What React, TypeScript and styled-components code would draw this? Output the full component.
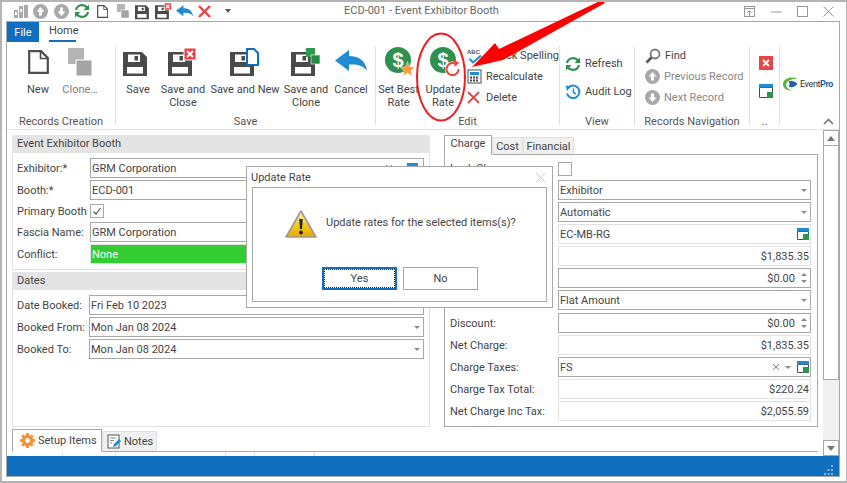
import React from 'react';
import styled, { createGlobalStyle } from 'styled-components';

const GlobalStyle = createGlobalStyle`
  html, body { margin: 0; padding: 0; background: #fff; }
  body { font-family: Roboto, "Liberation Sans", sans-serif; font-size: 11px; color: #444; }
  * { box-sizing: border-box; }
  svg { display: block; flex: none; }
`;

const BORDER = '#a8a8a8';
const LIGHT = '#e2e2e2';
const BLUE = '#106ebe';

const Window = styled.div`
  position: relative;
  width: 847px;
  height: 483px;
  border: 2px solid #b4b4b4;
  border-right-width: 1px;
  background: #fff;
  overflow: hidden;
`;

const TitleBar = styled.div`
  position: relative;
  height: 19px;
  display: flex;
  align-items: center;
  padding-left: 8px;
`;

const QuickIcons = styled.div`
  display: flex;
  align-items: center;
`;

const QuickSlot = styled.div<{ $w?: number }>`
  width: ${(p) => p.$w ?? 20.5}px;
  flex: none;
  display: flex;
  justify-content: center;
  align-items: center;
`;

const QuickCaret = styled.span`
  border-left: 3.5px solid transparent;
  border-right: 3.5px solid transparent;
  border-top: 4px solid #555;
`;

const TitleText = styled.div`
  position: absolute;
  left: 342px;
  top: 2px;
  color: #666;
  white-space: nowrap;
`;

const WindowButtons = styled.div`
  margin-left: auto;
  width: 103px;
  padding-right: 12px;
  display: flex;
  justify-content: space-between;
  align-items: center;
`;

const Frame = styled.div`
  margin: 0 3px 0 4px;
  width: 834px;
  height: 456px;
  border: 1px solid ${BORDER};
  display: flex;
  flex-direction: column;
`;

const TabRow = styled.div`
  height: 20px;
  display: flex;
`;

const FileTab = styled.div`
  width: 32px;
  background: ${BLUE};
  color: #fff;
  display: flex;
  align-items: center;
  justify-content: center;
`;

const HomeTab = styled.div`
  margin-left: 10px;
  width: 27px;
  height: 20px;
  border-bottom: 2px solid ${BLUE};
  text-align: center;
  color: #444;
  line-height: 18px;
  white-space: nowrap;
`;

const Ribbon = styled.div`
  height: 88px;
  display: flex;
  border-bottom: 1px solid ${LIGHT};
  padding: 4px 0;
  position: relative;
`;

const Group = styled.div<{ $w: number; $last?: boolean }>`
  width: ${(p) => p.$w}px;
  flex: none;
  display: flex;
  flex-direction: column;
  border-right: ${(p) => (p.$last ? 'none' : `1px solid ${LIGHT}`)};
`;

const GroupBody = styled.div<{ $pl?: number; $col?: boolean }>`
  flex: 1;
  display: flex;
  flex-direction: ${(p) => (p.$col ? 'column' : 'row')};
  padding-left: ${(p) => p.$pl ?? 0}px;
  min-height: 0;
`;

const GroupLabel = styled.div`
  height: 15px;
  line-height: 15px;
  margin-bottom: -4px;
  text-align: center;
  color: #555;
  white-space: nowrap;
`;

const LargeButton = styled.div<{ $w: number; $muted?: boolean }>`
  width: ${(p) => p.$w}px;
  flex: none;
  display: flex;
  flex-direction: column;
  align-items: center;
  color: ${(p) => (p.$muted ? '#808080' : '#444')};
  line-height: 13px;
  text-align: center;
  white-space: nowrap;
`;

const LargeIcon = styled.div<{ $pb?: number }>`
  height: 30px;
  margin-bottom: 7px;
  padding-bottom: ${(p) => p.$pb ?? 0}px;
  display: flex;
  align-items: flex-end;
  justify-content: center;
`;

const SmallColumn = styled.div<{ $gap: number; $pt: number; $pl: number }>`
  display: flex;
  flex-direction: column;
  gap: ${(p) => p.$gap}px;
  padding-top: ${(p) => p.$pt}px;
  padding-left: ${(p) => p.$pl}px;
`;

const SmallButton = styled.div<{ $muted?: boolean }>`
  height: 15px;
  display: flex;
  align-items: center;
  gap: 4px;
  white-space: nowrap;
  color: ${(p) => (p.$muted ? '#888' : '#444')};
`;

const DeleteText = styled.span`
  margin-left: 2px;
`;

const LogoBox = styled.div`
  display: flex;
  align-items: center;
  padding: 31px 0 0 2px;
  gap: 2px;
`;

const LogoText = styled.span`
  font-size: 9px;
  letter-spacing: -0.4px;
  color: #333;
  b { color: #1d5fa8; font-weight: 700; }
`;

const Collapse = styled.div`
  position: absolute;
  right: 5px;
  bottom: 4px;
  line-height: 0;
`;

const Body = styled.div`
  flex: 1;
  display: flex;
  min-height: 0;
`;

const Content = styled.div`
  flex: 1;
  min-width: 0;
  display: flex;
  flex-direction: column;
  padding: 5px 5px 0;
`;

const Columns = styled.div`
  display: flex;
  gap: 14px;
  height: 292px;
`;

const LeftColumn = styled.div`
  width: 418px;
  flex: none;
  display: flex;
  flex-direction: column;
  gap: 2px;
`;

const Panel = styled.div<{ $grow?: boolean }>`
  border: 1px solid ${LIGHT};
  border-top: none;
  ${(p) => (p.$grow ? 'flex: 1;' : '')}
`;

const PanelHeader = styled.div`
  height: 18px;
  margin: 0 -1px;
  padding-left: 5px;
  background: #e4e4e4;
  line-height: 17px;
  color: #444;
`;

const PanelRows = styled.div`
  padding: 5px 5px 5px 4px;
  display: flex;
  flex-direction: column;
  gap: 2px;
`;

const Row = styled.div<{ $h?: number; $mt?: number }>`
  display: flex;
  height: ${(p) => p.$h ?? 20}px;
  margin-top: ${(p) => p.$mt ?? 0}px;
  align-items: center;
`;

const Label = styled.div<{ $w: number }>`
  width: ${(p) => p.$w}px;
  flex: none;
  color: #444;
  white-space: nowrap;
`;

const Field = styled.div<{ $tone?: 'edit' | 'read' | 'green' }>`
  flex: 1;
  height: 20px;
  min-width: 0;
  display: flex;
  align-items: center;
  gap: 4px;
  padding: 0 1px;
  color: ${(p) => (p.$tone === 'green' ? '#fff' : '#444')};
  background: ${(p) => (p.$tone === 'green' ? '#33cc33' : '#fff')};
  border: 1px solid ${(p) => (p.$tone === 'edit' || !p.$tone ? BORDER : LIGHT)};
`;

const FieldValue = styled.span<{ $right?: boolean }>`
  flex: 1;
  white-space: nowrap;
  text-align: ${(p) => (p.$right ? 'right' : 'left')};
`;

const FieldGap = styled.span<{ $w: number }>`
  width: ${(p) => p.$w}px;
  flex: none;
`;

const Check = styled.div<{ $mt?: number }>`
  width: 14px;
  height: 14px;
  margin-top: ${(p) => p.$mt ?? 0}px;
  border: 1px solid ${BORDER};
  background: #fff;
  display: flex;
  align-items: center;
  justify-content: center;
`;

const DropArrow = styled.span`
  width: 0;
  height: 0;
  margin: 0 2px 0 1px;
  border-left: 3.5px solid transparent;
  border-right: 3.5px solid transparent;
  border-top: 3.5px solid #8a8a8a;
`;

const Spin = styled.span`
  display: flex;
  flex-direction: column;
  gap: 4px;
  margin: 0 2px;
  &::before, &::after {
    content: '';
    width: 0;
    height: 0;
    border-left: 3px solid transparent;
    border-right: 3px solid transparent;
  }
  &::before { border-bottom: 3px solid #8a8a8a; }
  &::after { border-top: 3px solid #8a8a8a; }
`;

const RightColumn = styled.div`
  width: 374px;
  flex: none;
  display: flex;
  flex-direction: column;
`;

const PageTabs = styled.div`
  height: 20px;
  display: flex;
  align-items: flex-end;
  margin-bottom: -1px;
`;

const PageTab = styled.div<{ $active?: boolean; $w: number }>`
  width: ${(p) => p.$w}px;
  height: ${(p) => (p.$active ? 20 : 18)}px;
  color: #444;
  text-align: center;
  line-height: ${(p) => (p.$active ? 16 : 17)}px;
  background: ${(p) => (p.$active ? '#fff' : '#f0f0f0')};
  border: 1px solid ${(p) => (p.$active ? BORDER : LIGHT)};
  border-bottom: ${(p) => (p.$active ? '1px solid #fff' : `1px solid ${BORDER}`)};
  position: relative;
  z-index: 1;
`;

const PagePane = styled.div`
  flex: 1;
  border: 1px solid ${BORDER};
  padding: 3px 6px 0 5px;
  display: flex;
  flex-direction: column;
  gap: 2px;
`;

const BottomTabs = styled.div`
  margin-top: 2px;
  height: 23px;
  display: flex;
  align-items: flex-end;
  border-bottom: 1px solid ${BORDER};
`;

const BottomTab = styled.div<{ $active?: boolean; $w: number }>`
  width: ${(p) => p.$w}px;
  height: ${(p) => (p.$active ? 23 : 21)}px;
  margin-bottom: -1px;
  display: flex;
  align-items: center;
  gap: 3px;
  padding-left: ${(p) => (p.$active ? 7 : 4)}px;
  color: #444;
  background: ${(p) => (p.$active ? '#fff' : '#f0f0f0')};
  border: 1px solid ${(p) => (p.$active ? BORDER : LIGHT)};
  border-bottom: ${(p) => (p.$active ? '1px solid #fff' : `1px solid ${BORDER}`)};
`;

const GridHead = styled.div`
  height: 4px;
  display: flex;
  margin: 0 0 0 5px;
`;

const GridTick = styled.div<{ $w: number }>`
  width: ${(p) => p.$w}px;
  flex: none;
  border-right: 1px solid ${LIGHT};
`;

const ScrollBar = styled.div`
  width: 16px;
  flex: none;
  background: #f0f0f0;
  display: flex;
  flex-direction: column;
`;

const ScrollButton = styled.div`
  height: 16px;
  flex: none;
  background: #fff;
  border: 1px solid ${BORDER};
  display: flex;
  align-items: center;
  justify-content: center;
`;

const ScrollThumb = styled.div`
  height: 235px;
  margin-top: -1px;
  background: #fff;
  border: 1px solid ${BORDER};
`;

const ScrollSpace = styled.div`
  flex: 1;
`;

const StatusBar = styled.div`
  height: 20px;
  flex: none;
  background: ${BLUE};
  position: relative;
`;

const Grip = styled.svg`
  position: absolute;
  right: 5px;
  bottom: 1px;
`;

const Dialog = styled.div`
  position: absolute;
  left: 244px;
  top: 164px;
  width: 307px;
  height: 142px;
  background: #fff;
  border: 1px solid ${BORDER};
  padding: 0 5px 5px;
  display: flex;
  flex-direction: column;
`;

const DialogTitle = styled.div`
  height: 20px;
  display: flex;
  align-items: center;
  justify-content: space-between;
  color: #444;
  padding: 0 1px 0 0;
  margin-left: -1px;
`;

const DialogBox = styled.div`
  flex: 1;
  border: 1px solid ${BORDER};
  display: flex;
  flex-direction: column;
`;

const DialogMessage = styled.div`
  height: 79px;
  display: flex;
  align-items: flex-start;
  gap: 9px;
  padding: 22px 0 0 32px;
  color: #444;
`;

const MessageText = styled.div`
  margin-top: 6px;
  white-space: nowrap;
`;

const DialogButtons = styled.div`
  display: flex;
  gap: 6px;
  padding-left: 69px;
`;

const DialogButton = styled.div<{ $focused?: boolean }>`
  width: 75px;
  height: 23px;
  color: #444;
  display: flex;
  align-items: center;
  justify-content: center;
  border: ${(p) => (p.$focused ? `2px solid ${BLUE}` : `1px solid ${BORDER}`)};
  outline: ${(p) => (p.$focused ? '1px dotted #222' : 'none')};
  outline-offset: -3px;
`;

const Annotation = styled.svg`
  position: absolute;
  left: -2px;
  top: -2px;
  pointer-events: none;
`;

const Ic = ({ s = 16, w = s, children }: { s?: number; w?: number; children: React.ReactNode }) => (
  <svg width={w} height={s} viewBox={`0 0 ${w} ${s}`}>
    {children}
  </svg>
);

const NewIcon = ({ size = 24 }: { size?: number }) => (
  <svg width={size * 0.875} height={size} viewBox="0 0 21 24">
    <path d="M1.2 1.2H13L19.8 8V22.8H1.2Z" fill="#fff" stroke="#4d4d4d" strokeWidth="2.2" />
    <path d="M12.5 1.2V8.5H19.8" fill="none" stroke="#4d4d4d" strokeWidth="1.6" />
  </svg>
);

const CloneIcon = ({ size = 28 }: { size?: number }) => (
  <svg width={size * 0.86} height={size} viewBox="0 0 24 28">
    <rect x="0" y="0" width="16" height="16" fill="#b4b4b4" />
    <rect x="8" y="12" width="16" height="16" fill="#a4a4a4" stroke="#fff" strokeWidth="1" />
  </svg>
);

// the floppy shape is shared by all save buttons, only the badge differs
const SaveShape = () => (
  <path
    fillRule="evenodd"
    fill="#4a4a4a"
    d="M0 0H19L24 5V24H0ZM5 2.5V10H17V2.5ZM11.5 4H15V8.5H11.5ZM4 15V21.5H20V15Z"
  />
);

const SaveIcon = ({ badge, small }: { badge?: 'close' | 'new' | 'clone'; small?: boolean }) => {
  const k = small ? 0.58 : 1;
  return (
    <svg width={30 * k} height={28 * k} viewBox="0 0 30 28">
      <g transform="translate(0 4)">
        <SaveShape />
      </g>
      {badge === 'close' && (
        <g>
          <rect x="16" y="0" width="12" height="12" fill="#e84040" stroke="#fff" />
          <path d="M19 3L25 9M25 3L19 9" stroke="#fff" strokeWidth="2" />
        </g>
      )}
      {badge === 'new' && (
        <path d="M17 1H24L28 5V17H17Z" fill="#fff" stroke={BLUE} strokeWidth="2" />
      )}
      {badge === 'clone' && (
        <g>
          <rect x="15" y="0" width="9" height="9" fill="#2e9a4d" />
          <rect x="20" y="7" width="9" height="9" fill="#258a42" stroke="#fff" strokeWidth="0.6" />
        </g>
      )}
    </svg>
  );
};

const CancelIcon = ({ small }: { small?: boolean }) => (
  <svg width={small ? 17 : 32} height={small ? 12 : 22} viewBox="0 0 32 22">
    <path d="M0 10.5L14 0V6C24 6 31 11 32 21C28 15 22 14 14 14.5V21Z" fill="#1f8bd0" />
  </svg>
);

const DollarIcon = ({ badge }: { badge: 'star' | 'refresh' }) => (
  <svg width="33" height="33" viewBox="0 0 33 33">
    <circle cx="16" cy="17" r="13" fill="#2e9150" />
    <text x="16" y="24" textAnchor="middle" fontFamily="'Liberation Sans', sans-serif" fontWeight="700" fontSize="20" fill="#fff">
      $
    </text>
    {badge === 'star' && (
      <path d="M25.500 18.500L27.500 23.800L33 24.200L28.800 27.700L30 33L25.500 30L21 33L22.200 27.700L18 24.200L23.500 23.800Z" fill="#f59a3c" stroke="#fff" strokeWidth="0.4" />
    )}
    {badge === 'refresh' && (
      <g>
        <circle cx="25.500" cy="26" r="7.500" fill="#fff" />
        <path d="M31.500 26A6 6 0 1 1 27 20.300" fill="none" stroke="#e84545" strokeWidth="2" />
        <path d="M26.500 16.800L32.500 19.800L27.500 23.800Z" fill="#e84545" />
      </g>
    )}
  </svg>
);

const SpellIcon = () => (
  <Ic s={16} w={16}>
    <text x="0" y="6" fontFamily="'Liberation Sans', sans-serif" fontWeight="700" fontSize="6" fill="#555">
      ABC
    </text>
    <path d="M2.5 11L6 14.5L14 7.5" fill="none" stroke="#1f8bd0" strokeWidth="2" />
  </Ic>
);

const CalcIcon = () => (
  <Ic s={15} w={15}>
    <rect x="1" y="1" width="13" height="13" fill="#fff" stroke="#4d4d4d" />
    <rect x="3" y="3" width="9" height="3" fill="#1f8bd0" />
    {[3, 6, 9].flatMap((x) =>
      [7.5, 10.5].map((y) => <rect key={`${x}${y}`} x={x} y={y} width="2" height="2" fill="#444" />),
    )}
  </Ic>
);

const XIcon = ({ s = 12, c = '#e84545', w = 2 }: { s?: number; c?: string; w?: number }) => (
  <Ic s={s}>
    <path d={`M1 1L${s - 1} ${s - 1}M${s - 1} 1L1 ${s - 1}`} stroke={c} strokeWidth={w} />
  </Ic>
);

const RefreshIcon = () => (
  <Ic s={16} w={16}>
    <path d="M2 7A6.2 6.2 0 0 1 13 4.5" fill="none" stroke="#2e9150" strokeWidth="2.2" />
    <path d="M15 1.5V7H9.5Z" fill="#2e9150" />
    <path d="M14 9A6.2 6.2 0 0 1 3 11.5" fill="none" stroke="#2e9150" strokeWidth="2.2" />
    <path d="M1 14.5V9H6.5Z" fill="#2e9150" />
  </Ic>
);

const AuditIcon = () => (
  <Ic s={16} w={16}>
    <path d="M3 4A6.3 6.3 0 1 1 2 9.5" fill="none" stroke="#1f8bd0" strokeWidth="2" />
    <path d="M0.8 1.5L6 2.5L2 7Z" fill="#1f8bd0" />
    <path d="M8.5 4.5V8.5L11 10" fill="none" stroke="#1f8bd0" strokeWidth="1.5" />
  </Ic>
);

const FindIcon = () => (
  <Ic s={16} w={16}>
    <circle cx="10" cy="6" r="4.5" fill="#fff" stroke="#777" strokeWidth="1.8" />
    <path d="M6.5 9.5L1.5 14.5" stroke="#555" strokeWidth="2.6" />
  </Ic>
);

const RoundArrow = ({ up, s = 15 }: { up?: boolean; s?: number }) => (
  <svg width={s} height={s} viewBox="0 0 15 15">
    <circle cx="7.5" cy="7.5" r="7.5" fill="#a8a8a8" />
    <g transform={up ? undefined : 'rotate(180 7.5 7.5)'}>
      <path d="M7.5 3L11.5 7.5H9V11.5H6V7.5H3.5Z" fill="#fff" />
    </g>
  </svg>
);

const WindowIcon = ({ s = 14 }: { s?: number }) => (
  <Ic s={s}>
    <path d={`M0.5 3.5H${s - 0.5}V${s - 5}M${s - 6} ${s - 0.5}H0.5V3.5`} fill="none" stroke="#4d4d4d" />
    <rect x="0" y="0" width={s} height="3.5" fill="#1f8bd0" />
    <rect x={s - 6} y={s - 6} width="6" height="6" fill="#2e9150" />
  </Ic>
);

const GearIcon = () => (
  <Ic s={15} w={15}>
    <circle cx="7.5" cy="7.5" r="4.2" fill="none" stroke="#f0913a" strokeWidth="3" />
    {[0, 45, 90, 135].map((a) => (
      <rect key={a} x="6" y="0" width="3" height="15" fill="#f0913a" transform={`rotate(${a} 7.5 7.5)`} opacity="0.95" />
    ))}
    <circle cx="7.5" cy="7.5" r="2.4" fill="#fff" />
  </Ic>
);

const NotesIcon = () => (
  <Ic s={15} w={14}>
    <rect x="1" y="1" width="11" height="13" fill="#fff" stroke="#555" />
    <path d="M3 4H9M3 6.5H7M3 9H5" stroke="#888" />
    <path d="M6 13L7 10L12 5L14 7L9 12Z" fill="#1f8bd0" />
  </Ic>
);

const WarningIcon = () => (
  <svg width="32" height="29" viewBox="0 0 32 29">
    <defs>
      <linearGradient id="warn" x1="0" y1="0" x2="0" y2="1">
        <stop offset="0" stopColor="#fff6c0" />
        <stop offset="0.55" stopColor="#f5c816" />
        <stop offset="1" stopColor="#e8a800" />
      </linearGradient>
    </defs>
    <path d="M16 1L31 27H1Z" fill="url(#warn)" stroke="#9a9a9a" strokeWidth="1.6" strokeLinejoin="round" />
    <path d="M14.3 9H17.7L17 19H15Z" fill="#222" />
    <circle cx="16" cy="22.5" r="1.9" fill="#222" />
  </svg>
);

const LogoMark = () => (
  <Ic s={14} w={16}>
    <path d="M15.500 1.500C9 -1 1.500 1 1 7C1 11 4 13.500 9.500 13.500C5 12 3.500 9 4.500 6C6.500 2.500 11 2 15.500 1.500Z" fill="#5cb531" />
    <path d="M6.500 4.500C9.500 3.500 13 4 15.500 7C13 10 9.500 11 6.500 9.500C8 8 8 6 6.500 4.500Z" fill="#1d5fa8" />
  </Ic>
);

const InputRow = ({
  label,
  w,
  value,
  right,
  tone = 'edit',
  mt,
  children,
}: {
  label: string;
  w: number;
  value: string;
  right?: boolean;
  tone?: 'edit' | 'read' | 'green';
  mt?: number;
  children?: React.ReactNode;
}) => (
  <Row $mt={mt}>
    <Label $w={w}>{label}</Label>
    <Field $tone={tone}>
      <FieldValue $right={right}>{value}</FieldValue>
      {children}
    </Field>
  </Row>
);

export default function App() {
  return (
    <>
      <GlobalStyle />
      <Window>
        <TitleBar>
          <QuickIcons>
            <QuickSlot>
              <Ic s={15} w={15}>
                <path d="M1 6H5V14H1ZM6 2H10V14H6ZM11 1H15V14H11Z" fill="#aaa" />
                <path d="M7 5H9V8H7ZM2 8H4V11H2Z" fill="#fff" />
              </Ic>
            </QuickSlot>
            <QuickSlot>
              <RoundArrow up />
            </QuickSlot>
            <QuickSlot>
              <RoundArrow />
            </QuickSlot>
            <QuickSlot>
              <RefreshIcon />
            </QuickSlot>
            <QuickSlot>
              <NewIcon size={13} />
            </QuickSlot>
            <QuickSlot>
              <CloneIcon size={14} />
            </QuickSlot>
            <QuickSlot>
              <SaveIcon small />
            </QuickSlot>
            <QuickSlot>
              <SaveIcon small badge="close" />
            </QuickSlot>
            <QuickSlot>
              <CancelIcon small />
            </QuickSlot>
            <QuickSlot>
              <XIcon s={13} w={2.4} />
            </QuickSlot>
            <QuickSlot $w={25}>
              <QuickCaret />
            </QuickSlot>
          </QuickIcons>
          <TitleText>ECD-001 - Event Exhibitor Booth</TitleText>
          <WindowButtons>
            <Ic s={13} w={13}>
              <rect x="1.5" y="1.5" width="10" height="10" fill="none" stroke="#999" />
              <path d="M1.5 3.5H11.5M6.5 11V6M4.5 7.5L6.5 5.5L8.5 7.5" fill="none" stroke="#999" />
            </Ic>
            <Ic s={13} w={11}>
              <path d="M0 7H11" stroke="#999" />
            </Ic>
            <Ic s={13} w={11}>
              <rect x="0.5" y="1.5" width="10" height="10" fill="none" stroke="#999" />
            </Ic>
            <Ic s={13} w={11}>
              <path d="M0.5 1.5L10.500 11.500M10.500 1.500L0.500 11.500" stroke="#999" />
            </Ic>
          </WindowButtons>
        </TitleBar>
        <Frame>
          <TabRow>
            <FileTab>File</FileTab>
            <HomeTab>Home</HomeTab>
          </TabRow>
          <Ribbon>
            <Group $w={109}>
              <GroupBody $pl={14}>
                <LargeButton $w={34}>
                  <LargeIcon $pb={2}>
                    <NewIcon />
                  </LargeIcon>
                  New
                </LargeButton>
                <LargeButton $w={50} $muted>
                  <LargeIcon>
                    <CloneIcon />
                  </LargeIcon>
                  Clone…
                </LargeButton>
              </GroupBody>
              <GroupLabel>Records Creation</GroupLabel>
            </Group>
            <Group $w={260}>
              <GroupBody $pl={5}>
                <LargeButton $w={34}>
                  <LargeIcon>
                    <SaveIcon />
                  </LargeIcon>
                  Save
                </LargeButton>
                <LargeButton $w={56}>
                  <LargeIcon>
                    <SaveIcon badge="close" />
                  </LargeIcon>
                  Save and
                  <br />
                  Close
                </LargeButton>
                <LargeButton $w={68}>
                  <LargeIcon>
                    <SaveIcon badge="new" />
                  </LargeIcon>
                  Save and New
                </LargeButton>
                <LargeButton $w={54}>
                  <LargeIcon>
                    <SaveIcon badge="clone" />
                  </LargeIcon>
                  Save and
                  <br />
                  Clone
                </LargeButton>
                <LargeButton $w={36}>
                  <LargeIcon $pb={4}>
                    <CancelIcon />
                  </LargeIcon>
                  Cancel
                </LargeButton>
              </GroupBody>
              <GroupLabel>Save</GroupLabel>
            </Group>
            <Group $w={184}>
              <GroupBody>
                <LargeButton $w={45}>
                  <LargeIcon>
                    <DollarIcon badge="star" />
                  </LargeIcon>
                  Set Best
                  <br />
                  Rate
                </LargeButton>
                <LargeButton $w={44}>
                  <LargeIcon>
                    <DollarIcon badge="refresh" />
                  </LargeIcon>
                  Update
                  <br />
                  Rate
                </LargeButton>
                <SmallColumn $gap={6} $pt={2} $pl={2}>
                  <SmallButton>
                    <SpellIcon />
                    Check Spelling
                  </SmallButton>
                  <SmallButton>
                    <CalcIcon />
                    Recalculate
                  </SmallButton>
                  <SmallButton>
                    <XIcon s={13} />
                    <DeleteText>Delete</DeleteText>
                  </SmallButton>
                </SmallColumn>
              </GroupBody>
              <GroupLabel>Edit</GroupLabel>
            </Group>
            <Group $w={75}>
              <GroupBody $col>
                <SmallColumn $gap={13} $pt={10} $pl={5}>
                  <SmallButton>
                    <RefreshIcon />
                    Refresh
                  </SmallButton>
                  <SmallButton>
                    <AuditIcon />
                    Audit Log
                  </SmallButton>
                </SmallColumn>
              </GroupBody>
              <GroupLabel>View</GroupLabel>
            </Group>
            <Group $w={115}>
              <GroupBody $col>
                <SmallColumn $gap={6} $pt={2} $pl={10}>
                  <SmallButton>
                    <FindIcon />
                    Find
                  </SmallButton>
                  <SmallButton $muted>
                    <RoundArrow up />
                    Previous Record
                  </SmallButton>
                  <SmallButton $muted>
                    <RoundArrow />
                    Next Record
                  </SmallButton>
                </SmallColumn>
              </GroupBody>
              <GroupLabel>Records Navigation</GroupLabel>
            </Group>
            <Group $w={30}>
              <GroupBody $col>
                <SmallColumn $gap={14} $pt={10} $pl={9}>
                  <Ic s={14}>
                    <rect width="14" height="14" fill="#e84545" />
                    <path d="M4 4L10 10M10 4L4 10" stroke="#fff" strokeWidth="1.8" />
                  </Ic>
                  <WindowIcon />
                </SmallColumn>
              </GroupBody>
              <GroupLabel>..</GroupLabel>
            </Group>
            <Group $w={60} $last>
              <LogoBox>
                <LogoMark />
                <LogoText>
                  Event<b>Pro</b>
                </LogoText>
              </LogoBox>
            </Group>
            <Collapse>
              <Ic s={8} w={11}>
                <path d="M1 7L5.5 2.5L10 7" fill="none" stroke="#777" strokeWidth="1.6" />
              </Ic>
            </Collapse>
          </Ribbon>
          <Body>
            <Content>
              <Columns>
                <LeftColumn>
                  <Panel>
                    <PanelHeader>Event Exhibitor Booth</PanelHeader>
                    <PanelRows>
                      <InputRow label="Exhibitor:*" w={73} value="GRM Corporation">
                        <XIcon s={8} c="#888" w={1} />
                        <FieldGap $w={6} />
                        <WindowIcon s={11} />
                        <FieldGap $w={0} />
                      </InputRow>
                      <InputRow label="Booth:*" w={73} value="ECD-001" />
                      <Row $h={18}>
                        <Label $w={73}>Primary Booth</Label>
                        <Check>
                          <Ic s={10} w={10}>
                            <path d="M1.5 5.5L4 8L8.5 2" fill="none" stroke="#555" strokeWidth="1.2" />
                          </Ic>
                        </Check>
                      </Row>
                      <InputRow label="Fascia Name:" w={73} value="GRM Corporation" />
                      <InputRow label="Conflict:" w={73} value="None" tone="green" />
                    </PanelRows>
                  </Panel>
                  <Panel $grow>
                    <PanelHeader>Dates</PanelHeader>
                    <PanelRows>
                      <InputRow label="Date Booked:" w={72} value="Fri Feb 10 2023" />
                      <InputRow label="Booked From:" w={72} value="Mon Jan 08 2024">
                        <DropArrow />
                      </InputRow>
                      <InputRow label="Booked To:" w={72} value="Mon Jan 08 2024">
                        <DropArrow />
                      </InputRow>
                    </PanelRows>
                  </Panel>
                </LeftColumn>
                <RightColumn>
                  <PageTabs>
                    <PageTab $active $w={48}>
                      Charge
                    </PageTab>
                    <PageTab $w={31}>Cost</PageTab>
                    <PageTab $w={51}>Financial</PageTab>
                  </PageTabs>
                  <PagePane>
                    <Row>
                      <Label $w={108}>Lock Charge:</Label>
                      <Check $mt={2} />
                    </Row>
                    <InputRow label="Charge To:" w={108} value="Exhibitor">
                      <DropArrow />
                    </InputRow>
                    <InputRow label="Rate Type:" w={108} value="Automatic">
                      <DropArrow />
                    </InputRow>
                    <InputRow label="Rate:" w={108} value="EC-MB-RG" tone="read">
                      <WindowIcon s={12} />
                    </InputRow>
                    <InputRow label="Rate Charge:" w={108} value="$1,835.35" right tone="read" />
                    <InputRow label="Adjustment:" w={108} value="$0.00" right>
                      <Spin />
                    </InputRow>
                    <InputRow label="Discount Type:" w={108} value="Flat Amount">
                      <DropArrow />
                    </InputRow>
                    <InputRow label="Discount:" w={108} value="$0.00" right mt={1}>
                      <Spin />
                    </InputRow>
                    <InputRow label="Net Charge:" w={108} value="$1,835.35" right tone="read" />
                    <InputRow label="Charge Taxes:" w={108} value="FS">
                      <XIcon s={8} c="#888" w={1} />
                      <DropArrow />
                      <WindowIcon s={12} />
                    </InputRow>
                    <InputRow label="Charge Tax Total:" w={108} value="$220.24" right tone="read" />
                    <InputRow label="Net Charge Inc Tax:" w={108} value="$2,055.59" right tone="read" />
                  </PagePane>
                </RightColumn>
              </Columns>
              <BottomTabs>
                <BottomTab $active $w={90}>
                  <GearIcon />
                  Setup Items
                </BottomTab>
                <BottomTab $w={55}>
                  <NotesIcon />
                  Notes
                </BottomTab>
              </BottomTabs>
              <GridHead>
                <GridTick $w={46} />
                <GridTick $w={53} />
                <GridTick $w={110} />
                <GridTick $w={29} />
                <GridTick $w={60} />
              </GridHead>
            </Content>
            <ScrollBar>
              <ScrollButton>
                <Ic s={5} w={8}>
                  <path d="M0 5L4 0L8 5Z" fill="#777" />
                </Ic>
              </ScrollButton>
              <ScrollThumb />
              <ScrollSpace />
              <ScrollButton>
                <Ic s={5} w={8}>
                  <path d="M0 0L4 5L8 0Z" fill="#777" />
                </Ic>
              </ScrollButton>
            </ScrollBar>
          </Body>
          <StatusBar>
            <Grip width="11" height="11" viewBox="0 0 11 11">
              <path d="M8 1h2v2H8zM4.500 5h2v2h-2zM8 5h2v2H8zM1 9h2v2H1zM4.500 9h2v2h-2zM8 9h2v2H8z" fill="#7fb2de" />
            </Grip>
          </StatusBar>
        </Frame>
        <Dialog>
          <DialogTitle>
            Update Rate
            <XIcon s={11} c="#ccc" w={1} />
          </DialogTitle>
          <DialogBox>
            <DialogMessage>
              <WarningIcon />
              <MessageText>Update rates for the selected items(s)?</MessageText>
            </DialogMessage>
            <DialogButtons>
              <DialogButton $focused>Yes</DialogButton>
              <DialogButton>No</DialogButton>
            </DialogButtons>
          </DialogBox>
        </Dialog>
        <Annotation width="847" height="483" viewBox="0 0 847 483">
          <ellipse cx="441" cy="77" rx="24" ry="43.500" fill="none" stroke="#ee1c25" strokeWidth="2" />
          <path d="M472 67L495 43L499 49L602 0L605 3L503 60Z" fill="#fe0000" />
        </Annotation>
      </Window>
    </>
  );
}
